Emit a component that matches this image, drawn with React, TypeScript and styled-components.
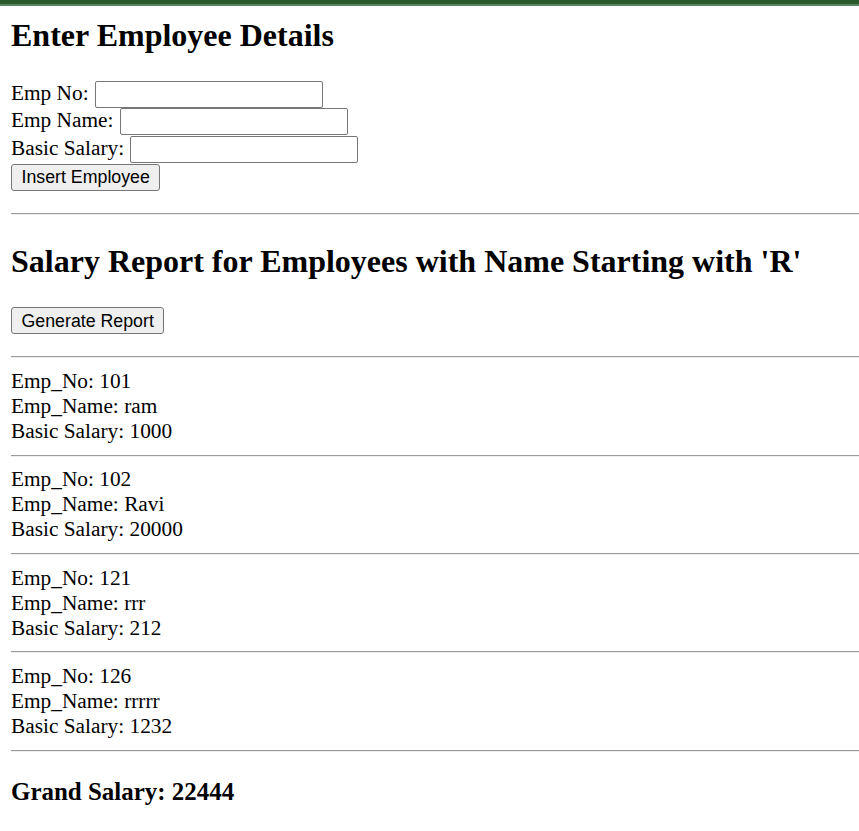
import React from "react";
import styled, { createGlobalStyle } from "styled-components";

const GlobalStyle = createGlobalStyle`
  html, body {
    margin: 0;
    padding: 0;
    background: #ffffff;
  }
  body {
    font-family: "Liberation Serif", "Times New Roman", serif;
    font-size: 21.33px;
    line-height: 25px;
    color: #000000;
  }
`;

const TopBar = styled.div`
  height: 4px;
  background: #2b5a2c;
  border-bottom: 2px solid #5b835e;
`;

const Page = styled.main`
  padding: 10.7px 0 40px 11px;
`;

const Heading = styled.h2`
  margin: 0 0 27px;
  font-size: 32px;
  line-height: 37px;
  font-weight: bold;
`;

const SectionHeading = styled(Heading)`
  margin-top: 28.5px;
`;

const Form = styled.form`
  margin: 0 0 21.33px;
`;

const FieldRow = styled.div`
  line-height: 25px;
  height: 27.67px;
  white-space: nowrap;
`;

const TextInput = styled.input`
  box-sizing: border-box;
  width: 228px;
  height: 27px;
  margin: 0 0 0 1px;
  padding: 1px 3px;
  border: 1px solid #767676;
  border-radius: 2px;
  background: #ffffff;
  font-family: "Liberation Sans", Arial, sans-serif;
  font-size: 17.78px;
  vertical-align: baseline;
`;

const Button = styled.button`
  box-sizing: border-box;
  height: 27px;
  padding: 0 9.5px;
  border: 1px solid #767676;
  border-radius: 3px;
  background: #efefef;
  color: #000000;
  font-family: "Liberation Sans", Arial, sans-serif;
  font-size: 17.78px;
  line-height: 20px;
  cursor: pointer;
`;

const ButtonRow = styled.div`
  display: flex;
  align-items: center;
  height: 27.67px;
`;

const Rule = styled.hr`
  margin: 10.67px 0 10.8px;
  height: 0;
  border: none;
  border-top: 1px solid #9a9a9a;
  border-bottom: 1px solid #eeeeee;
`;

const Record = styled.div`
  line-height: 25px;
`;

const Line = styled.div`
  white-space: nowrap;
`;

const Total = styled.h3`
  margin: 25px 0;
  font-size: 24.96px;
  line-height: 29px;
  font-weight: bold;
`;

type Employee = { no: number; name: string; salary: number };

const employees: Employee[] = [
  { no: 101, name: "ram", salary: 1000 },
  { no: 102, name: "Ravi", salary: 20000 },
  { no: 121, name: "rrr", salary: 212 },
  { no: 126, name: "rrrrr", salary: 1232 },
];

export default function App() {
  const total = employees.reduce((s, e) => s + e.salary, 0);
  return (
    <>
      <GlobalStyle />
      <TopBar />
      <Page>
        <Heading>Enter Employee Details</Heading>
        <Form onSubmit={(e) => e.preventDefault()}>
          <FieldRow>
            Emp No: <TextInput type="text" name="empno" />
          </FieldRow>
          <FieldRow>
            Emp Name: <TextInput type="text" name="empname" />
          </FieldRow>
          <FieldRow>
            Basic Salary: <TextInput type="text" name="salary" />
          </FieldRow>
          <ButtonRow>
            <Button type="submit">Insert Employee</Button>
          </ButtonRow>
        </Form>
        <Rule />
        <SectionHeading>Salary Report for Employees with Name Starting with 'R'</SectionHeading>
        <Form onSubmit={(e) => e.preventDefault()}>
          <ButtonRow>
            <Button type="submit">Generate Report</Button>
          </ButtonRow>
        </Form>
        <Rule />
        {employees.map((e) => (
          <React.Fragment key={e.no}>
            <Record>
              <Line>Emp_No: {e.no}</Line>
              <Line>Emp_Name: {e.name}</Line>
              <Line>Basic Salary: {e.salary}</Line>
            </Record>
            <Rule />
          </React.Fragment>
        ))}
        <Total>Grand Salary: {total}</Total>
      </Page>
    </>
  );
}
